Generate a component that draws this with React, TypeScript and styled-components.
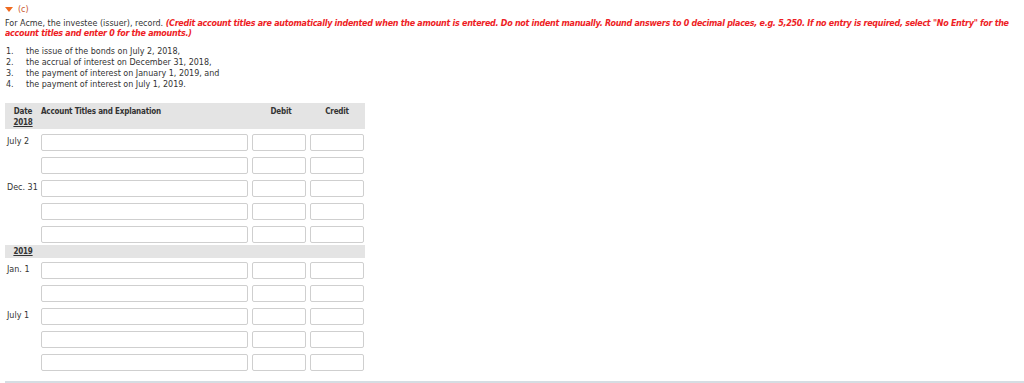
import styled, { createGlobalStyle } from "styled-components";

const GlobalStyle = createGlobalStyle`
  html, body { margin: 0; padding: 0; background: #fff; }
  body {
    font-family: "DejaVu Sans", Verdana, sans-serif;
    font-size: 8px;
    color: #333;
  }
`;

const Page = styled.div`
  width: 1019px;
  height: 383px;
  box-sizing: border-box;
  margin-left: 5px;
  padding-top: 4px;
  border-bottom: 2px solid #d6dde3;
  overflow: hidden;
`;

const PartToggle = styled.div`
  display: flex;
  align-items: center;
  gap: 5px;
  height: 10px;
  color: #c8552c;
  font-size: 8px;
`;

const Instructions = styled.p`
  margin: 5px 0 0 0;
  line-height: 10px;
  width: 1016px;
`;

const Note = styled.span`
  color: #ee1d25;
  font-style: italic;
  font-weight: bold;
  letter-spacing: -0.28px;
`;

const Steps = styled.ol`
  margin: 7px 0 0 0;
  padding: 0;
  list-style: none;
  line-height: 11px;
`;

const Step = styled.li`
  display: flex;
`;

const StepNum = styled.span`
  width: 20px;
  padding-left: 1px;
`;

const Journal = styled.div`
  margin-top: 13px;
  width: 360px;
`;

const Band = styled.div<{ $tall?: boolean }>`
  background: #e4e4e4;
  display: grid;
  grid-template-columns: 36px 211px 58px 54px;
  align-items: start;
  padding-top: ${p => (p.$tall ? "3px" : "1px")};
  height: ${p => (p.$tall ? "23px" : "12px")};
  line-height: 11px;
  font-weight: bold;
  font-stretch: condensed;
  letter-spacing: -0.2px;
`;

const HeadCell = styled.div<{ $center?: boolean }>`
  text-align: ${p => (p.$center ? "center" : "left")};
`;

const Year = styled.div`
  text-decoration: underline;
  text-align: center;
  font-weight: bold;
`;

const Rows = styled.div<{ $top: number; $bottom?: number }>`
  display: flex;
  flex-direction: column;
  gap: 6px;
  margin-top: ${p => p.$top}px;
  margin-bottom: ${p => p.$bottom ?? 0}px;
`;

const Row = styled.div`
  display: grid;
  grid-template-columns: 32px 207px 54px 54px;
  column-gap: 4px;
  height: 17px;
`;

const DateLabel = styled.div`
  padding: 3px 0 0 2px;
  line-height: 10px;
  white-space: nowrap;
`;

const Field = styled.input`
  box-sizing: border-box;
  width: 100%;
  height: 17px;
  margin: 0;
  padding: 0 3px;
  border: 1px solid #cfcfcf;
  border-radius: 2px;
  background: #fff;
  font: inherit;
`;

function Triangle() {
  return (
    <svg width="8" height="5" viewBox="0 0 8 5">
      <polygon points="0,0 8,0 4,5" fill="#ef6a1f" />
    </svg>
  );
}

const entries2018 = ["July 2", "", "Dec. 31", "", ""];
const entries2019 = ["Jan. 1", "", "July 1", "", ""];

function EntryRow({ label }: { label: string }) {
  return (
    <Row>
      <DateLabel>{label}</DateLabel>
      <Field type="text" />
      <Field type="text" />
      <Field type="text" />
    </Row>
  );
}

export default function App() {
  return (
    <>
      <GlobalStyle />
      <Page>
        <PartToggle>
          <Triangle />
          <span>(c)</span>
        </PartToggle>

        <Instructions>
          For Acme, the investee (issuer), record.{" "}
          <Note>
            (Credit account titles are automatically indented when the amount is entered. Do not indent
            manually. Round answers to 0 decimal places, e.g. 5,250. If no entry is required, select "No
            Entry" for the account titles and enter 0 for the amounts.)
          </Note>
        </Instructions>

        <Steps>
          <Step><StepNum>1.</StepNum>the issue of the bonds on July 2, 2018,</Step>
          <Step><StepNum>2.</StepNum>the accrual of interest on December 31, 2018,</Step>
          <Step><StepNum>3.</StepNum>the payment of interest on January 1, 2019, and</Step>
          <Step><StepNum>4.</StepNum>the payment of interest on July 1, 2019.</Step>
        </Steps>

        <Journal>
          <Band $tall>
            <HeadCell $center>Date<Year>2018</Year></HeadCell>
            <HeadCell>Account Titles and Explanation</HeadCell>
            <HeadCell $center>Debit</HeadCell>
            <HeadCell $center>Credit</HeadCell>
          </Band>
          <Rows $top={5} $bottom={2}>
            {entries2018.map((d, i) => <EntryRow key={i} label={d} />)}
          </Rows>
          <Band>
            <Year>2019</Year>
          </Band>
          <Rows $top={4}>
            {entries2019.map((d, i) => <EntryRow key={i} label={d} />)}
          </Rows>
        </Journal>
      </Page>
    </>
  );
}
